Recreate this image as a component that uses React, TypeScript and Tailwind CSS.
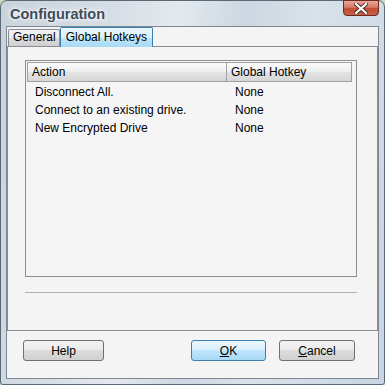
import React from "react";

const font = { fontFamily: '"Liberation Sans", Arial, sans-serif' };

function Btn({ children, primary, w }: { children: React.ReactNode; primary?: boolean; w: string }) {
  return (
    <div
      className={
        "h-[21px] rounded-[3px] border flex items-center justify-center text-[12px] text-black " +
        w +
        " " +
        (primary
          ? "border-[#3c7fb1] bg-[linear-gradient(to_bottom,#eaf6fd_0%,#d9f0fc_45%,#bee6fd_50%,#a7d9f5_100%)]"
          : "border-[#707070] bg-[linear-gradient(to_bottom,#f2f2f2_0%,#ebebeb_45%,#dddddd_50%,#cfcfcf_100%)]")
      }
    >
      {children}
    </div>
  );
}

export default function App() {
  return (
    <div style={font} className="w-[385px] h-[385px] overflow-hidden bg-[#c8d8c0]">
      <div className="w-[385px] h-[385px] rounded-t-[7px] rounded-b-[3px] border border-[#5b6876] bg-[linear-gradient(100deg,#c9d3dc_0%,#d6dde4_25%,#e3e9ee_40%,#ccd7e1_55%,#d9e2ea_70%,#c7d5e2_100%)] flex flex-col relative">
        {/* title bar */}
        <div className="h-[25px] flex items-start justify-between shrink-0">
          <div className="pl-[9px] pt-[4px] text-[14.5px] leading-[18px] font-bold text-[#3d4b5b] [text-shadow:0_0_6px_#ffffff,0_0_3px_#ffffff]">
            Configuration
          </div>
          <div className="mr-[5px] -mt-[1px] w-[36px] h-[16px] rounded-b-[4px] border border-[#6b2a20] bg-[linear-gradient(to_bottom,#e8a899_0%,#d47966_45%,#c24a33_55%,#c8614a_100%)] flex items-center justify-center">
            <svg width="14" height="11" viewBox="0 0 14 11">
              <path d="M2 1 L12 10 M12 1 L2 10" stroke="#4a2a26" strokeWidth="4" strokeLinecap="square" />
              <path d="M2 1 L12 10 M12 1 L2 10" stroke="#ffffff" strokeWidth="2.2" strokeLinecap="square" />
            </svg>
          </div>
        </div>

        {/* client */}
        <div className="ml-[5px] w-[373px] h-[353px] border border-[#7f8890] bg-[#f4f4f4] flex flex-col">
          {/* tab strip */}
          <div className="h-[19px] flex items-end pl-[1px] shrink-0 relative z-10">
            <div className="h-[17px] border border-b-0 border-[#898c95] rounded-t-[2px] bg-[linear-gradient(to_bottom,#f2f2f2_0%,#ebebeb_50%,#dddddd_51%,#cfcfcf_100%)] text-[12px] leading-[15px] pl-[4px] pr-[3px] text-black whitespace-nowrap">
              General
            </div>
            <div className="h-[20px] -mb-[1px] w-[93px] border border-b-0 border-[#3c7fb1] rounded-t-[2px] bg-[linear-gradient(to_bottom,#eaf6fd_0%,#d9f0fc_50%,#bee6fd_51%,#a7d9f5_100%)] text-[12px] leading-[18px] pl-[5px] text-black whitespace-nowrap">
              Global Hotkeys
            </div>
          </div>

          {/* tab page */}
          <div className="h-[285px] border border-[#898c95] bg-[#f4f4f4] flex flex-col shrink-0">
            <div className="ml-[17px] mt-[13px] w-[332px] h-[217px] border border-[#8d8d8d] bg-[#f5f5f5] p-[1px] flex flex-col">
              <div className="flex h-[20px] text-[12px] text-black">
                <div className="w-[200px] h-[20px] border border-[#a0a0a0] bg-[linear-gradient(to_bottom,#fbfbfb_0%,#f0f0f0_45%,#e2e2e2_55%,#d6d6d6_100%)] pl-[4px] leading-[18px]">
                  Action
                </div>
                <div className="w-[125px] h-[20px] border border-l-0 border-[#a0a0a0] bg-[linear-gradient(to_bottom,#fbfbfb_0%,#f0f0f0_45%,#e2e2e2_55%,#d6d6d6_100%)] pl-[4px] leading-[18px]">
                  Global Hotkey
                </div>
              </div>
              <div className="flex flex-col text-[12px] text-black pt-[1px]">
                {[
                  ["Disconnect All.", "None"],
                  ["Connect to an existing drive.", "None"],
                  ["New Encrypted Drive", "None"],
                ].map(([a, b]) => (
                  <div key={a} className="flex h-[18px] items-center">
                    <div className="w-[201px] pl-[8px]">{a}</div>
                    <div className="pl-[7px]">{b}</div>
                  </div>
                ))}
              </div>
            </div>
            <div className="ml-[17px] mt-[15px] w-[332px] h-[1px] bg-[#b0b0b0]" />
          </div>

          {/* buttons */}
          <div className="flex pt-[9px] pl-[16px]">
            <Btn w="w-[81px]">Help</Btn>
            <div className="ml-[87px]">
              <Btn primary w="w-[75px]">
                <span><span className="underline">O</span>K</span>
              </Btn>
            </div>
            <div className="ml-[13px]">
              <Btn w="w-[76px]">
                <span><span className="underline">C</span>ancel</span>
              </Btn>
            </div>
          </div>
        </div>
      </div>
    </div>
  );
}
